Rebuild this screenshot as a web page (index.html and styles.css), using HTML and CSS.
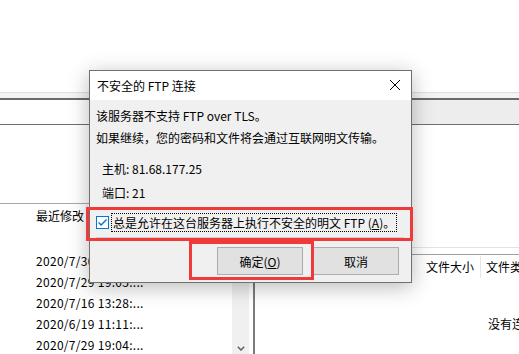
FILE: index.html
```
<!DOCTYPE html>
<html>
<head>
	<meta charset="utf-8">
	<title>不安全的 FTP 连接</title>
	<link rel="stylesheet" href="styles.css">
</head>
<body>
	<div class="app">
		<div class="toolbar"></div>
		<div class="splitter"></div>
		<div class="pathbars">
			<div class="path-local"></div>
			<div class="path-remote"></div>
		</div>
		<div class="panes">
			<div class="pane local">
				<div class="local-tree"></div>
				<div class="list">
					<div class="list-main">
						<div class="list-head">
							<span class="col-date">最近修改</span>
						</div>
						<div class="row"></div>
						<div class="row">2020/7/30 10:12:...</div>
						<div class="row">2020/7/29 19:05:...</div>
						<div class="row">2020/7/16 13:28:...</div>
						<div class="row">2020/6/19 11:11:...</div>
						<div class="row">2020/7/29 19:04:...</div>
					</div>
					<div class="vscroll">
						<div class="vscroll-track"></div>
						<div class="vscroll-btn">
							<svg width="8" height="5" viewBox="0 0 8 5"><path d="M0.8 0.8 L4 4 L7.2 0.8" fill="none" stroke="#606060" stroke-width="1.5"/></svg>
						</div>
					</div>
				</div>
			</div>
			<div class="pane remote">
				<div class="remote-tree"></div>
				<div class="remote-gap"></div>
				<div class="list-head remote-head">
					<span class="col-name"></span>
					<span class="col-size">文件大小</span>
					<span class="col-type">文件类型</span>
				</div>
				<div class="empty">没有连接到任何服务器</div>
			</div>
		</div>
	</div>

	<div class="dialog">
		<div class="titlebar">
			<span class="title">不安全的 FTP 连接</span>
			<span class="close">
				<svg width="10" height="10" viewBox="0 0 10 10"><path d="M0 0 L10 10 M10 0 L0 10" stroke="#000" stroke-width="1"/></svg>
			</span>
		</div>
		<div class="dlg-body">
			<p class="msg">该服务器不支持 FTP over TLS。</p>
			<p class="msg">如果继续，您的密码和文件将会通过互联网明文传输。</p>
			<div class="info">
				<div>主机: 81.68.177.25</div>
				<div>端口: 21</div>
			</div>
			<label class="check-row">
				<svg class="checkbox" width="13" height="13" viewBox="0 0 13 13"><rect x="0.5" y="0.5" width="12" height="12" fill="#fff" stroke="#0078d7"/><path d="M2.6 6.6 L5.1 9.1 L10.5 3.6" fill="none" stroke="#0a6fd0" stroke-width="1.4"/></svg>
				<span class="focus">总是允许在这台服务器上执行不安全的明文 FTP (<u>A</u>)。</span>
			</label>
			<div class="sep"></div>
			<div class="buttons">
				<button type="button">确定(<u>O</u>)</button>
				<button type="button">取消</button>
			</div>
		</div>
	</div>

	<div class="mark mark-check"></div>
	<div class="mark mark-ok"></div>
</body>
</html>
```

FILE: styles.css
```
body {
	margin: 0;
	width: 519px;
	height: 354px;
	overflow: hidden;
	background: #fff;
	color: #000;
	font-family: "Noto Sans CJK SC", sans-serif;
	font-size: 12px;
	position: relative;
}

.toolbar {
	height: 92px;
	background: #fff;
}

.splitter {
	height: 5px;
	border-top: 1px solid #dedede;
	border-bottom: 2px solid #6a6a6a;
	background: #f4f4f4;
}

.pathbars {
	display: flex;
	height: 24px;
	border-bottom: 1px solid #6e6e6e;
}

.path-local {
	width: 255px;
	background: #fff;
}

.path-remote {
	flex: 1;
	background: #ededed;
}

.panes {
	display: flex;
	height: 232px;
}

.pane.local {
	width: 253px;
	display: flex;
	flex-direction: column;
	border-right: 2px solid #7c7c7c;
}

.local-tree {
	height: 78px;
}

.list {
	flex: 1;
	display: flex;
	border-top: 1px solid #a8a8a8;
}

.list-main {
	width: 232px;
	overflow: hidden;
	white-space: nowrap;
}

.list-head {
	display: flex;
	height: 25px;
	line-height: 24px;
}

.col-date {
	width: 51px;
	padding-left: 36px;
	border-right: 1px solid #e5e5e5;
	margin: 1px 0 2px;
	line-height: 22px;
}

.row {
	height: 21px;
	line-height: 21px;
	padding-left: 36px;
	letter-spacing: 0.3px;
}

.vscroll {
	width: 17px;
	margin-right: 4px;
	display: flex;
	flex-direction: column;
	background: #f0f0f0;
}

.vscroll-track {
	flex: 1;
}

.vscroll-btn {
	height: 17px;
	display: flex;
	align-items: center;
	justify-content: center;
}

.pane.remote {
	flex: 1;
	display: flex;
	flex-direction: column;
	overflow: hidden;
	white-space: nowrap;
}

.remote-tree {
	height: 122px;
}

.remote-gap {
	height: 6px;
	border-top: 1px solid #e3e3e3;
}

.remote-head {
	border-top: 1px solid #a0a0a0;
}

.col-name {
	width: 165px;
	flex: none;
}

.col-size {
	width: 54px;
	flex: none;
	padding-right: 6px;
	text-align: right;
	border-right: 1px solid #e5e5e5;
	margin: 1px 0 2px;
	line-height: 22px;
}

.col-type {
	padding-left: 5px;
}

.empty {
	padding: 33px 0 0 233px;
	line-height: 22px;
}

/* dialog */

.dialog {
	position: absolute;
	left: 89px;
	top: 70px;
	width: 321px;
	border: 1px solid #707070;
	background: #f0f0f0;
	box-shadow: 0 4px 20px rgba(0, 0, 0, 0.28);
}

.titlebar {
	height: 29px;
	display: flex;
	align-items: center;
	justify-content: space-between;
	background: #fff;
	padding-left: 7px;
}

.close {
	width: 32px;
	height: 29px;
	display: flex;
	align-items: center;
	justify-content: center;
	margin-top: -1px;
}

.dlg-body {
	padding: 5px 7px 7px 6px;
}

.msg {
	margin: 0;
	line-height: 22px;
}

.info {
	margin-top: 8px;
	padding-left: 6px;
	line-height: 24px;
}

.check-row {
	display: flex;
	align-items: center;
	margin-top: 8px;
	height: 19px;
}

.checkbox {
	flex: none;
	margin-right: 2px;
}

.focus {
	border: 1px dotted #000;
	padding: 0 1px;
	line-height: 17px;
	white-space: nowrap;
}

.sep {
	margin-top: 5px;
	height: 1px;
	border-top: 1px solid #cfcfcf;
}

.buttons {
	display: flex;
	justify-content: flex-end;
	gap: 10px;
	margin-top: 8px;
	padding-right: 5px;
}

button {
	width: 86px;
	height: 28px;
	box-sizing: border-box;
	background: #e1e1e1;
	border: 1px solid #adadad;
	font-family: inherit;
	font-size: 12px;
	color: #000;
	padding: 0;
}

/* red annotation frames */

.mark {
	position: absolute;
	border: 3px solid #f03a3a;
	box-sizing: border-box;
}

.mark-check {
	left: 86px;
	top: 207px;
	width: 327px;
	height: 34px;
}

.mark-ok {
	left: 189px;
	top: 241px;
	width: 125px;
	height: 39px;
}
```
